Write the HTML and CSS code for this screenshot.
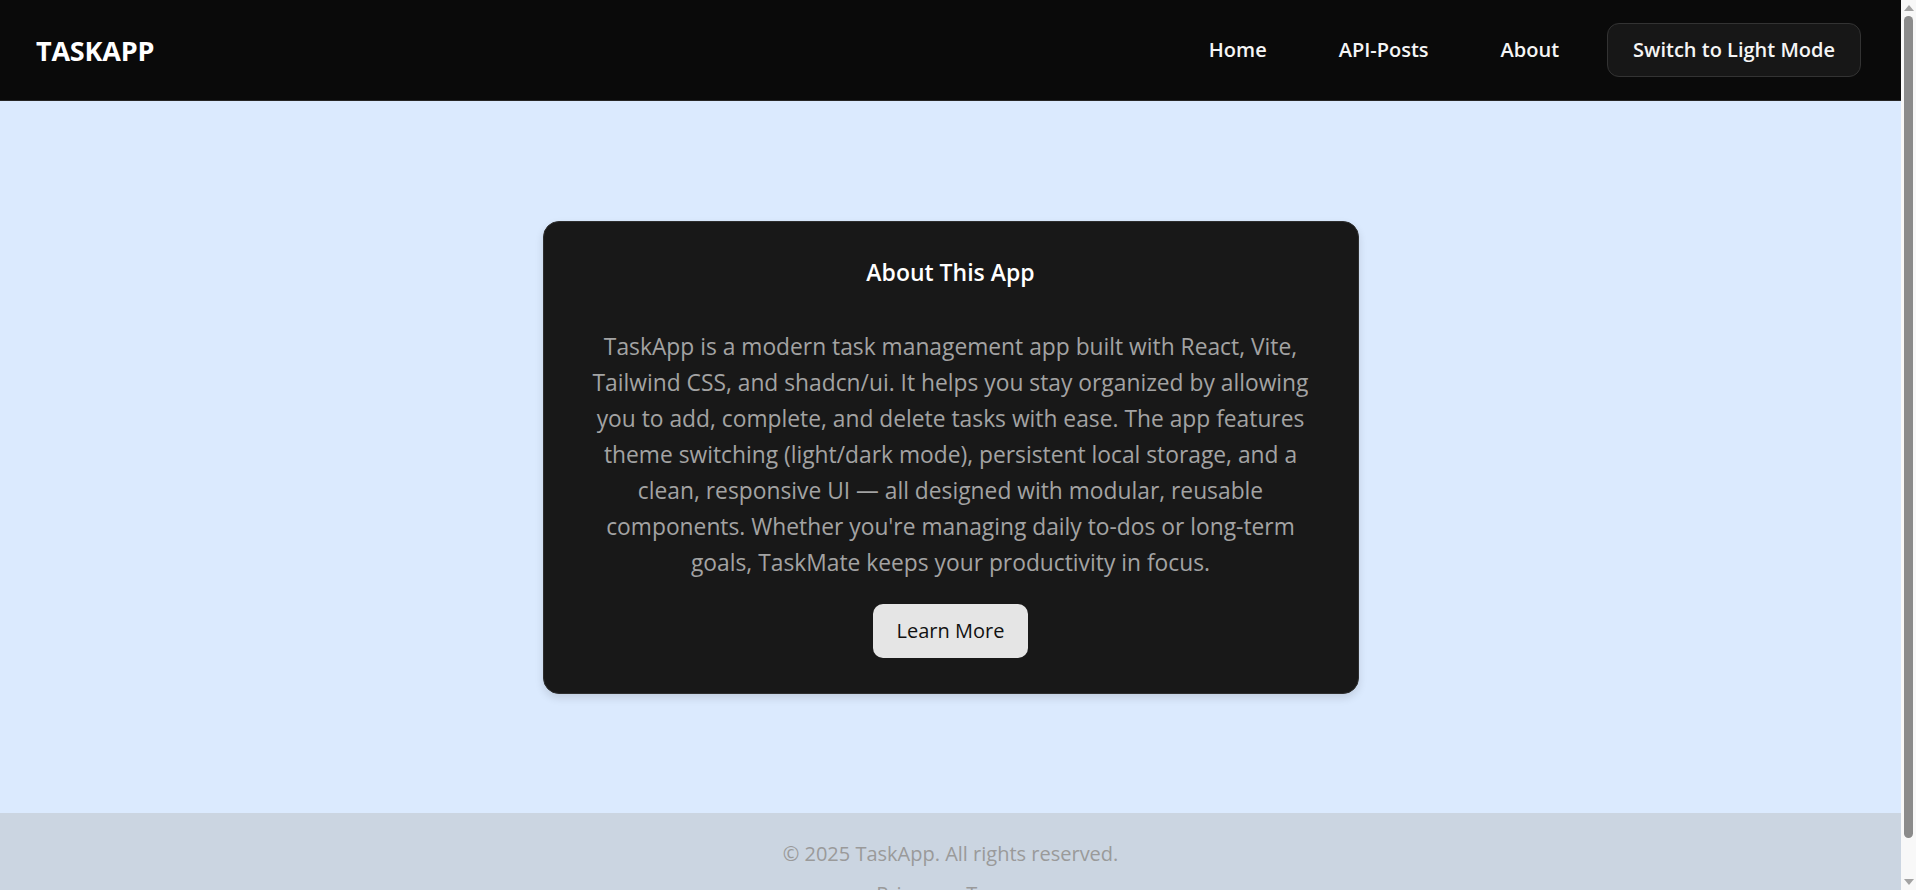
FILE: index.html
```html
<!DOCTYPE html>
<html lang="en">
<head>
<meta charset="utf-8">
<title>TaskApp</title>
<link rel="stylesheet" href="styles.css">
</head>
<body>
<header class="topbar">
  <div class="logo">TASKAPP</div>
  <nav class="nav">
    <a class="nav-link" href="#">Home</a>
    <a class="nav-link" href="#">API-Posts</a>
    <a class="nav-link" href="#">About</a>
    <button class="theme-btn" type="button">Switch to Light Mode</button>
  </nav>
</header>
<main class="main">
  <section class="card">
    <h2 class="card-title">About This App</h2>
    <p class="card-text">TaskApp is a modern task management app built with React, Vite, Tailwind CSS, and shadcn/ui. It helps you stay organized by allowing you to add, complete, and delete tasks with ease. The app features theme switching (light/dark mode), persistent local storage, and a clean, responsive UI — all designed with modular, reusable components. Whether you're managing daily to-dos or long-term goals, TaskMate keeps your productivity in focus.</p>
    <button class="learn-btn" type="button">Learn More</button>
  </section>
</main>
<footer class="footer">
  <p class="copy">© 2025 TaskApp. All rights reserved.</p>
  <div class="footer-links">
    <a href="#">Privacy</a>
    <a href="#">Terms</a>
  </div>
</footer>
<div class="scrollbar" aria-hidden="true">
  <span class="arrow arrow-up"></span>
  <span class="thumb"></span>
  <span class="arrow arrow-down"></span>
</div>
</body>
</html>
```
FILE: styles.css
```css
* { box-sizing: border-box; }
html, body { margin: 0; padding: 0; }
body {
  font-family: "Open Sans", "Noto Sans", sans-serif;
  background: #dbeafe;
  color: #f5f5f5;
  padding-right: 15px;
}
.topbar {
  height: 101px;
  background: #0a0a0a;
  border-bottom: 1px solid #262626;
  display: flex;
  align-items: center;
  justify-content: space-between;
  padding: 0 40px 0 36px;
}
.logo {
  font-size: 27px;
  font-weight: 700;
  color: #ffffff;
  letter-spacing: -0.2px;
}
.nav {
  display: flex;
  align-items: center;
  gap: 24px;
}
.nav-link {
  color: #f5f5f5;
  text-decoration: none;
  font-size: 20px;
  font-weight: 600;
  padding: 0 24px;
  line-height: 28px;
}
.theme-btn {
  font-family: inherit;
  font-size: 20px;
  font-weight: 600;
  line-height: 28px;
  color: #f5f5f5;
  background: #171717;
  border: 1px solid #333333;
  border-radius: 12px;
  padding: 12px 25px;
  height: 54px;
}
.main {
  min-height: 80vh;
  display: flex;
  align-items: center;
  justify-content: center;
}
.card {
  width: 816px;
  background: #181818;
  border: 1px solid #2e2e2e;
  border-radius: 16px;
  box-shadow: 0 4px 8px rgba(0, 0, 0, 0.12);
  padding: 33px 42px 35px;
  display: flex;
  flex-direction: column;
  align-items: center;
  text-align: center;
}
.card-title {
  margin: 0 0 40px;
  font-size: 23px;
  line-height: 34px;
  font-weight: 600;
  color: #ffffff;
}
.card-text {
  margin: 0;
  font-size: 22.8px;
  line-height: 36px;
  color: #a3a3a3;
}
.learn-btn {
  margin-top: 23px;
  font-family: inherit;
  font-size: 20px;
  font-weight: 500;
  line-height: 28px;
  color: #111111;
  background: #e5e5e5;
  border: none;
  border-radius: 10px;
  padding: 13px 24px;
  height: 54px;
}
.footer {
  background: #cbd5e1;
  padding: 27px 0 24px;
  display: flex;
  flex-direction: column;
  align-items: center;
  gap: 12px;
  color: #9a9a9a;
  font-size: 20px;
  line-height: 28px;
}
.copy { margin: 0; }
.footer-links {
  display: flex;
  gap: 24px;
}
.footer-links a {
  color: #9a9a9a;
  text-decoration: none;
}
.scrollbar {
  position: fixed;
  top: 0;
  right: 0;
  width: 15px;
  height: 100vh;
  background: #f8f8f8;
  display: flex;
  flex-direction: column;
  align-items: center;
  padding: 5px 0 5px;
  gap: 5px;
}
.thumb {
  flex: 1;
  width: 9px;
  background: #8b8b8b;
  border-radius: 5px;
  margin-bottom: 36px;
}
.arrow {
  width: 0;
  height: 0;
  border-left: 5px solid transparent;
  border-right: 5px solid transparent;
}
.arrow-up { border-bottom: 6px solid #a3a3a3; }
.arrow-down { border-top: 6px solid #a3a3a3; }
```
